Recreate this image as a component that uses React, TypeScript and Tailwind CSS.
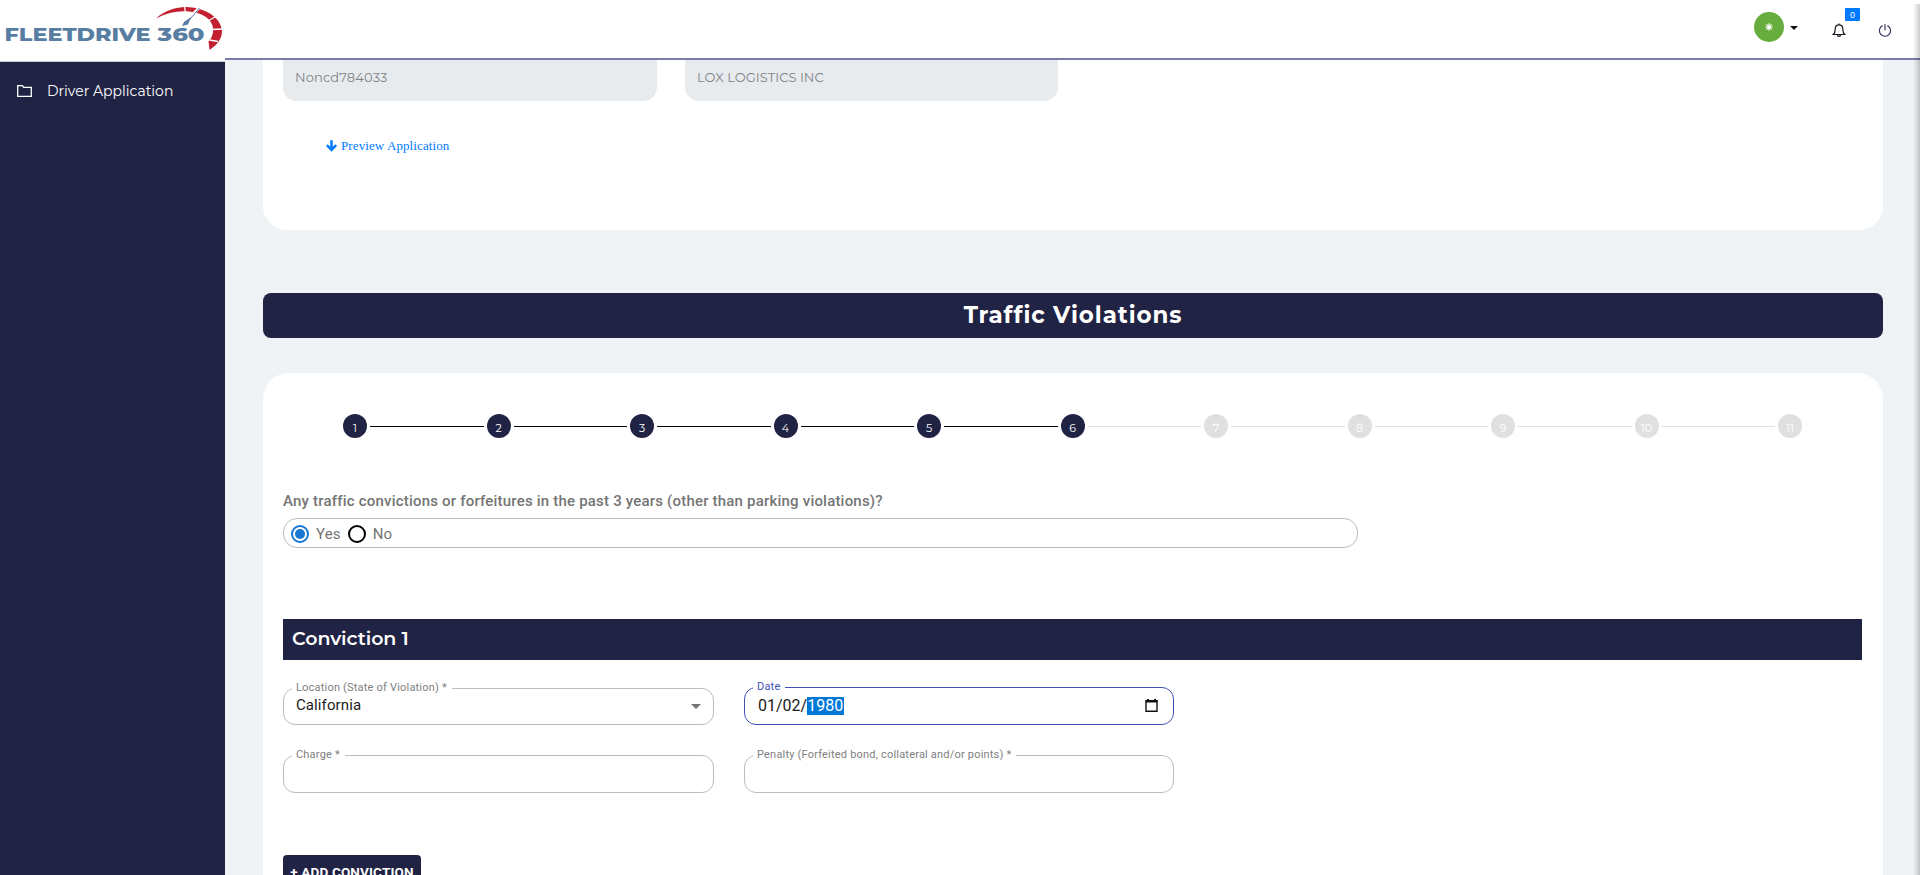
import type { ReactNode } from "react";

const heading = "font-['Montserrat','Inter',sans-serif]";

function Logo() {
  return (
    <svg width="225" height="61" viewBox="0 0 225 61" role="img" aria-label="FleetDrive 360">
      <g fontSize="18" fontWeight="800" fontFamily="Montserrat, 'DejaVu Sans', sans-serif" fill="#587da3">
        <text x="4.500" y="41.300" textLength="146" lengthAdjust="spacingAndGlyphs">FLEETDRIVE</text>
        <text x="157.500" y="41.300" textLength="47" lengthAdjust="spacingAndGlyphs">360</text>
      </g>
      <path d="M156 18.5C166 9.500 178 6.500 189 7.200C207 8.500 221 18 222 31C222 39 217 45 209.500 50L208.500 41C212 38 213.500 33 213 28C212 19 202 12.500 189 11.500C178 10.500 167 12.500 156 18.500Z" fill="#c21f30" />
      <path d="M184.500 6L185.500 13M207 21.500L215 17M211 29.500L223 29M207 39.500L218 41.500" stroke="#fff" strokeWidth="1.300" />
      <path d="M194 13L199.500 7.500" stroke="#fff" strokeWidth="3" />
      <path d="M199.500 8L188 21.500" stroke="#587da3" strokeWidth="1" />
      <path d="M191 17L184 22L182 26L188 24.500Z" fill="#587da3" />
    </svg>
  );
}

function Header() {
  return (
    <header className="flex h-[60px] items-start border-b-2 border-[#7b7bab] bg-white">
      <div className="ml-auto flex pt-3">
        <div className="flex size-[30px] items-center justify-center rounded-full bg-[#67ad3d]">
          <svg width="8" height="8" viewBox="0 0 8 8" stroke="#fff" strokeWidth="1.1">
            <path d="M4 .3v7.400M.3 4h7.400M1.300 1.300l5.400 5.400M6.700 1.300L1.300 6.700" />
          </svg>
        </div>
        <svg className="mt-[14px] ml-[6px]" width="8" height="4" viewBox="0 0 8 4"><path d="M0 0h8L4 4z" fill="#111" /></svg>
        <div className="relative mt-[11px] ml-[34px] h-4 w-[14px]">
          <svg width="14" height="15" viewBox="0 0 14 15" fill="none" stroke="#15151f" strokeWidth="1.200">
            <path d="M7 .5v1M1.300 11.500c1.500-1.200 1.900-2.500 1.900-5.500C3.200 3.300 4.700 1.800 7 1.800S10.800 3.300 10.800 6c0 3 .4 4.300 1.900 5.500zM5.500 11.800c0 2.200 3 2.200 3 0" />
          </svg>
          <span className="absolute -top-[15px] left-[13px] flex h-[13px] w-[15px] items-center justify-center rounded-[1px] bg-[#007bff] font-['Inter',sans-serif] text-[8px] leading-none text-white">0</span>
        </div>
        <svg className="mt-[12px] mr-[28px] ml-[32px]" width="14" height="15" viewBox="0 0 14 15" fill="none" stroke="#34345f" strokeWidth="1.200">
          <path d="M7 .3v6M4.600 1.600a5.600 5.600 0 1 0 4.800 0" />
        </svg>
      </div>
    </header>
  );
}

function Sidebar() {
  return (
    <aside className="flex w-[225px] shrink-0 flex-col bg-[#212344]">
      <div className="h-[62px] border-b border-[#c5ccd2] bg-white"><Logo /></div>
      <nav className="flex items-center pt-[19px] pl-[17px] text-white">
        <svg width="15" height="12" viewBox="0 0 15 12" fill="none" stroke="#fff" strokeWidth="1.300">
          <path d="M.7 .7h4.600l1.500 1.700h7.500v8.900H.7z" />
        </svg>
        <span className={`${heading} ml-[15px] text-[14px] leading-5`}>Driver Application</span>
      </nav>
    </aside>
  );
}

const steps = [1, 2, 3, 4, 5, 6, 7, 8, 9, 10, 11];
const currentStep = 6;

function Stepper() {
  return (
    <ol className="flex items-center pr-[61px] pl-[60px]">
      {steps.map((n) => (
        <li key={n} className={n < steps.length ? "flex flex-1 items-center" : "flex items-center"}>
          <span className={`${heading} flex size-6 shrink-0 items-center justify-center rounded-full pt-[5px] text-[11px] leading-none text-white ${n <= currentStep ? "bg-[#212344]" : "bg-[#e0e0e0]"}`}>{n}</span>
          {n < steps.length && <span className={`mx-[3px] mt-px h-px flex-1 ${n < currentStep ? "bg-black" : "bg-[#e0e0e0]"}`} />}
        </li>
      ))}
    </ol>
  );
}

function Radio({ label, checked }: { label: string; checked?: boolean }) {
  return (
    <label className="flex items-center pt-[2px]">
      <span className={`flex size-[18px] items-center justify-center rounded-full border-2 ${checked ? "border-[#1976d2]" : "border-black"}`}>
        {checked && <span className="size-[10px] rounded-full bg-[#1976d2]" />}
      </span>
      <span className="ml-[7px] text-[15px] leading-[22px] tracking-[0.15px] text-[#757575]">{label}</span>
    </label>
  );
}

function Field({ label, focused, select, children }: { label: string; focused?: boolean; select?: boolean; children?: ReactNode }) {
  return (
    <fieldset className={`min-w-0 self-end rounded-[12px] border pr-3 pl-2 ${select ? "h-[43px]" : "h-[44px]"} ${focused ? "border-[#3f51b5]" : "border-[#bdbdbd]"}`}>
      <legend className={`h-[13px] pr-[5px] pl-1 text-[11px] leading-[12px] tracking-[0.2px] ${focused ? "text-[#3f51b5]" : "text-[#808080]"}`}>{label}</legend>
      <div className={`flex items-center text-[#212121] ${select ? "h-5 pl-1 text-[15px] tracking-[0.1px]" : "h-[23px] pl-[5px] text-[16px]"}`}>{children}</div>
    </fieldset>
  );
}

export default function App() {
  return (
    <div className="relative flex h-[875px] w-[1920px] overflow-hidden bg-[#eff3f6] font-['Roboto',sans-serif]">
      <Sidebar />
      <div className="flex min-w-0 flex-1 flex-col">
        <Header />
        <main className="flex flex-1 flex-col overflow-hidden pr-[37px] pl-[38px]">
          <section className="h-[170px] shrink-0 rounded-b-[24px] bg-white px-5">
            <div className={`${heading} flex gap-7 text-[13px] text-[#808488]`}>
              <div className="flex h-[41px] w-[374px] items-start rounded-b-[14px] bg-[#e8ebee] pt-[8px] pl-3"><span className="tracking-[0.15px]">Noncd784033</span></div>
              <div className="flex h-[41px] w-[373px] items-start rounded-b-[14px] bg-[#e8ebee] pt-[8px] pl-3"><span className="tracking-[0.05px]">LOX LOGISTICS INC</span></div>
            </div>
            <a className="mt-[36px] ml-[43px] flex items-center gap-1 font-['Liberation_Serif',serif] text-[13px] leading-[18px] tracking-[0.1px] text-[#007bff]">
              <svg width="11" height="12" viewBox="0 0 11 12" fill="none" stroke="#007bff" strokeWidth="2.500"><path d="M5.500 .3v9.400M.9 5.200l4.600 4.700 4.600-4.700" /></svg>
              <span>Preview Application</span>
            </a>
          </section>

          <h1 className={`${heading} mt-[63px] flex h-[45px] shrink-0 items-center justify-center rounded-lg bg-[#212344] text-[23px] font-bold tracking-[0.9px] text-white`}>Traffic Violations</h1>

          <section className="mt-[35px] h-[600px] shrink-0 rounded-t-[26px] bg-white pt-[41px]">
            <div className="px-5"><Stepper /></div>
            <div className="pr-[21px] pl-5">
              <p className="mt-[53px] text-[15px] leading-5 font-medium tracking-[0.2px] text-[#757575]"><span>Any traffic convictions or forfeitures in the past 3 years (other than parking violations)?</span></p>
              <div className="mt-[7px] flex h-[30px] w-[1075px] items-center gap-[7px] rounded-[14px] border border-[#bdbdbd] pl-[7px]">
                <Radio label="Yes" checked />
                <Radio label="No" />
              </div>
              <h2 className={`${heading} mt-[71px] flex h-[41px] items-center bg-[#212344] pl-[9px] text-[19px] font-semibold tracking-[-0.05px] text-white`}>Conviction 1</h2>
              <div className="mt-[21px] grid grid-cols-[431px_430px] gap-x-[30px] gap-y-[24px]">
                <Field label="Location (State of Violation) *" select>
                  <span>California</span>
                  <svg className="mt-[3px] ml-auto" width="10" height="5" viewBox="0 0 10 5"><path d="M0 0h10L5 5z" fill="#757575" /></svg>
                </Field>
                <Field label="Date" focused>
                  <span>01/02/</span><span className="bg-[#0078d7] pr-px leading-[18px] text-white">1980</span>
                  <svg className="mr-[3px] ml-auto" width="13" height="13" viewBox="0 0 13 13" fill="none" stroke="#111" strokeWidth="1.400"><path d="M1 1.700h11v10.500H1z" /><path d="M.5 2.500h12M3 0v2M10 0v2" strokeWidth="2" /></svg>
                </Field>
                <Field label="Charge *" />
                <Field label="Penalty (Forfeited bond, collateral and/or points) *" />
              </div>
              <button className="mt-[62px] flex h-[34px] w-[138px] items-center justify-center rounded bg-[#212344] text-[13.5px] font-bold tracking-[0.15px] whitespace-nowrap text-white">+ ADD CONVICTION</button>
            </div>
          </section>
        </main>
      </div>
      <div className="absolute top-[4px] right-0 h-[871px] w-[7px] bg-linear-to-r from-transparent to-black/20" />
    </div>
  );
}
